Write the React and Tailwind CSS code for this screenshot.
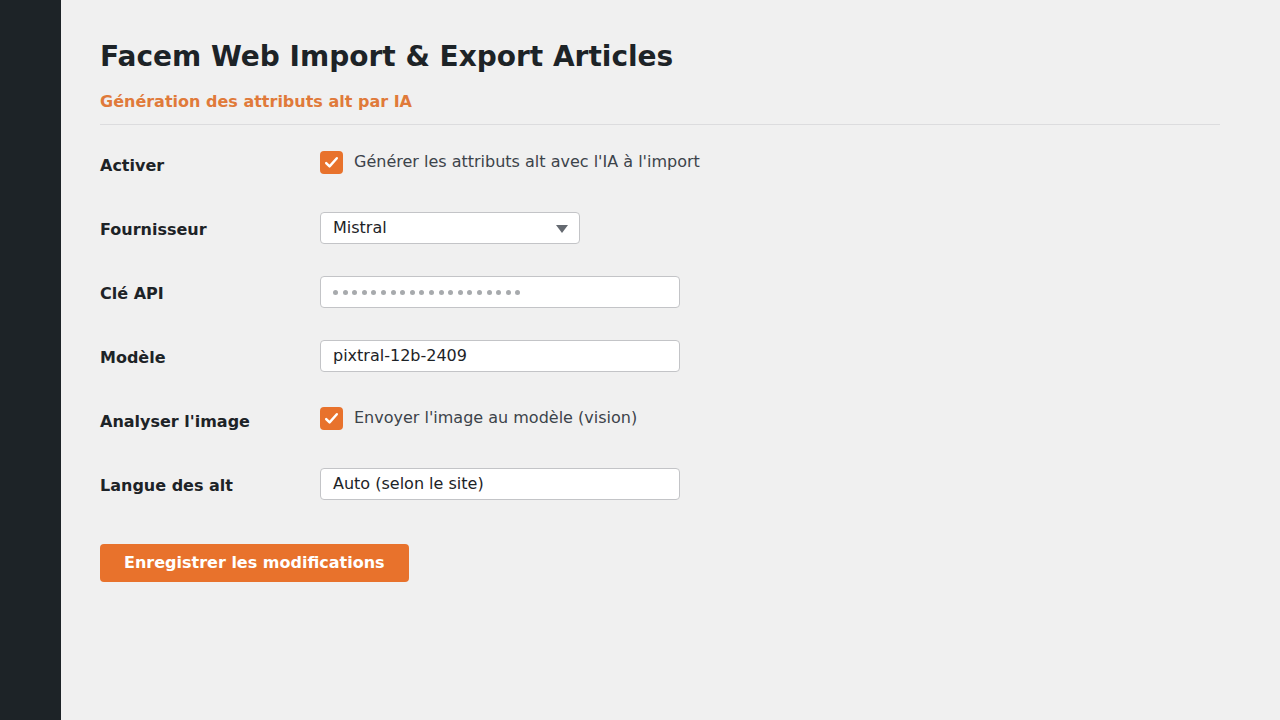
import { useState } from 'react';

const font = { fontFamily: '"DejaVu Sans", "Liberation Sans", sans-serif' };

function Check({ checked, onChange, label }) {
  return (
    <label className="flex items-center gap-[11px] cursor-pointer -translate-y-[2px]">
      <span
        onClick={onChange}
        className="w-[23px] h-[23px] rounded-[4px] bg-[#e8722c] flex items-center justify-center shrink-0"
      >
        {checked && (
          <svg width="17" height="17" viewBox="0 0 16 16" fill="none">
            <path d="M3 8.5l3.2 3.2L13 4" stroke="#fff" strokeWidth="2.3" strokeLinecap="round" strokeLinejoin="round" />
          </svg>
        )}
      </span>
      <span className="text-[16px] text-[#3c434a]">{label}</span>
    </label>
  );
}

function Row({ label, children }) {
  return (
    <div className="flex items-center h-[64px]">
      <div className="w-[220px] text-[16px] font-bold text-[#1d2327] pt-[4px]">{label}</div>
      <div>{children}</div>
    </div>
  );
}

const inputCls =
  'w-[360px] h-[32px] bg-white border border-[#c3c4c7] rounded-[4px] flex items-center pl-[12px] text-[16px] text-[#1d2327]';

export default function App() {
  const [enabled, setEnabled] = useState(true);
  const [vision, setVision] = useState(true);

  return (
    <div className="flex min-h-[720px] bg-[#f0f0f0]" style={font}>
      <aside className="w-[61px] bg-[#1d2327] shrink-0" />
      <main className="flex-1 pl-[39px] pr-[60px] pt-[39px]">
        <h1 className="text-[28px] leading-[36px] font-bold text-[#1d2327]">Facem Web Import &amp; Export Articles</h1>
        <h2 className="mt-[15px] text-[16px] leading-[24px] font-bold text-[#e07a3a]">Génération des attributs alt par IA</h2>
        <div className="mt-[10px] border-t border-[#dcdcde]" />

        <div className="mt-[7px]">
          <Row label="Activer">
            <Check checked={enabled} onChange={() => setEnabled(!enabled)} label="Générer les attributs alt avec l'IA à l'import" />
          </Row>
          <Row label="Fournisseur">
            <div className={`relative !w-[260px] ${inputCls}`}>
              Mistral
              <span className="absolute right-[11px] top-[12px] w-0 h-0 border-l-[6px] border-r-[6px] border-t-[8px] border-l-transparent border-r-transparent border-t-[#646970]" />
            </div>
          </Row>
          <Row label="Clé API">
            <div className={`${inputCls} gap-[4.6px]`}>
              {Array.from({ length: 20 }).map((_, i) => (
                <span key={i} className="w-[5px] h-[5px] rounded-full bg-[#a7aaad]" />
              ))}
            </div>
          </Row>
          <Row label="Modèle">
            <div className={inputCls}>pixtral-12b-2409</div>
          </Row>
          <Row label="Analyser l'image">
            <Check checked={vision} onChange={() => setVision(!vision)} label="Envoyer l'image au modèle (vision)" />
          </Row>
          <Row label="Langue des alt">
            <div className={inputCls}>Auto (selon le site)</div>
          </Row>
        </div>

        <button className="mt-[28px] h-[38px] px-[24px] rounded-[4px] bg-[#e8722c] text-white text-[16px] font-bold">
          Enregistrer les modifications
        </button>
      </main>
    </div>
  );
}
